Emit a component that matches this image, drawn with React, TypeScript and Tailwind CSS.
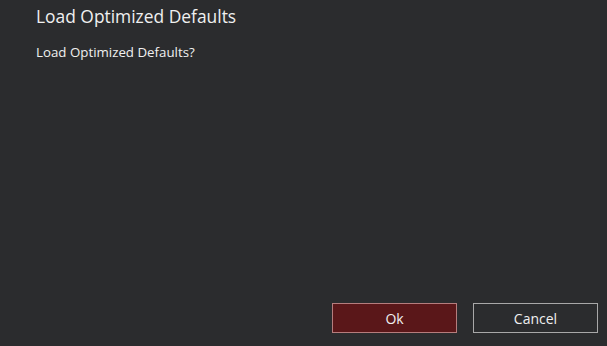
import React from 'react';

export default function App() {
    return (
        <div
            className="w-[607px] h-[346px] bg-[#2b2c2e] flex flex-col text-[#f0f0f0]"
            style={{ fontFamily: '"Open Sans", "DejaVu Sans", sans-serif' }}
        >
            <div className="pl-[36px] pt-[4px]">
                <h1 className="text-[17.4px] leading-[25px]">Load Optimized Defaults</h1>
                <p className="mt-[14px] text-[13.3px] leading-[19px]">Load Optimized Defaults?</p>
            </div>
            <div className="mt-auto flex justify-end gap-[16px] pr-[9px] pb-[13px]">
                <button className="w-[125px] h-[30px] bg-[#5a1719] border border-[#b57d7d] text-[14px] text-[#f0f0f0]">
                    Ok
                </button>
                <button className="w-[125px] h-[30px] bg-[#2b2c2e] border border-[#a8a8a8] text-[14px] text-[#f0f0f0]">
                    Cancel
                </button>
            </div>
        </div>
    );
}
